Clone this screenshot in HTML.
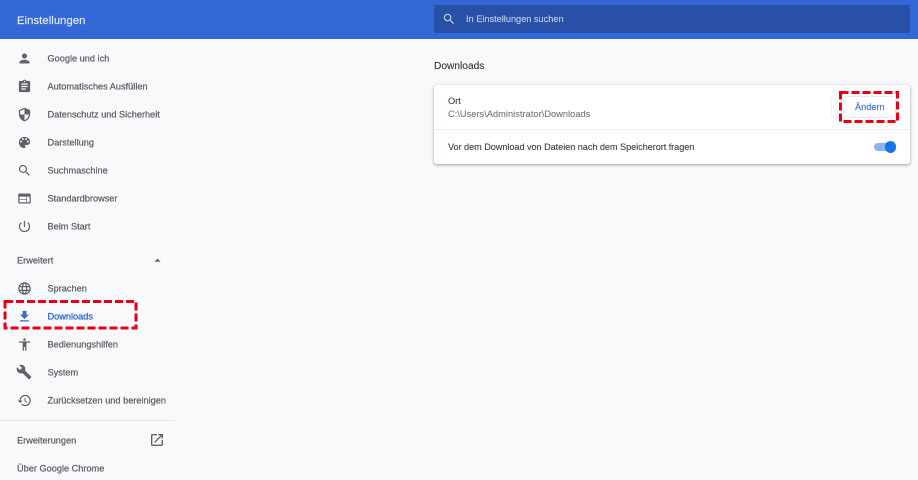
<!DOCTYPE html>
<html><head><meta charset="utf-8"><style>
html,body{margin:0;padding:0}
body{width:918px;height:480px;overflow:hidden;background:#f8f9fa;position:relative;font-family:"Liberation Sans",sans-serif;font-size:9.2px;color:#5f6368}
.t{position:absolute;white-space:nowrap;line-height:12px;font-weight:400;filter:blur(.25px)}
.nav{left:47.5px;-webkit-text-stroke:.25px #5f6368;transform:translateY(-.5px)}
svg.i{position:absolute;left:16.500px;width:15px;height:15px;fill:#5f6368}
</style></head><body>
<div style="position:absolute;left:0;top:0;width:918px;height:39px;background:#3367d6"></div>
<div style="position:absolute;left:434px;top:5px;width:476px;height:28px;background:#2850a7;border-radius:1px"></div>
<div class="t" style="left:17px;top:15px;font-size:11.2px;color:#e8effa;letter-spacing:.1px;-webkit-text-stroke:.15px #e8effa">Einstellungen</div>
<svg style="position:absolute;left:442px;top:12px;width:14px;height:14px;fill:#c3d1f0" viewBox="0 0 24 24"><path d="M15.5 14h-.79l-.28-.27A6.47 6.47 0 0 0 16 9.5 6.5 6.500 0 1 0 9.5 16c1.610 0 3.090-.59 4.230-1.570l.27.28v.79l5 4.990L20.490 19l-4.990-5zm-6 0C7.010 14 5 11.990 5 9.500S7.010 5 9.500 5 14 7.010 14 9.500 11.990 14 9.500 14z"/></svg>
<div class="t" style="left:466px;top:13px;color:#b9c8ea;-webkit-text-stroke:.15px #b9c8ea">In Einstellungen suchen</div>

<svg class="i" style="top:51px" viewBox="0 0 24 24"><path d="M12 12c2.210 0 4-1.790 4-4s-1.790-4-4-4-4 1.790-4 4 1.790 4 4 4zm0 2c-2.670 0-8 1.340-8 4v2h16v-2c0-2.660-5.330-4-8-4z"/></svg>
<div class="t nav" style="top:53px">Google und ich</div>
<svg class="i" style="top:79px" viewBox="0 0 24 24"><path d="M19 3h-4.180C14.400 1.840 13.300 1 12 1s-2.400.84-2.820 2H5c-1.100 0-2 .9-2 2v14c0 1.100.9 2 2 2h14c1.100 0 2-.9 2-2V5c0-1.100-.9-2-2-2zm-7 0c.55 0 1 .45 1 1s-.45 1-1 1-1-.45-1-1 .45-1 1-1zm2 14H7v-2h7v2zm3-4H7v-2h10v2zm0-4H7V7h10v2z"/></svg>
<div class="t nav" style="top:81px">Automatisches Ausfüllen</div>
<svg class="i" style="top:107px" viewBox="0 0 24 24"><path d="M12 1L3 5v6c0 5.550 3.840 10.740 9 12 5.160-1.260 9-6.450 9-12V5l-9-4zm0 10.990h7c-.53 4.120-3.280 7.790-7 8.940V12H5V6.300l7-3.110v8.800z"/></svg>
<div class="t nav" style="top:109px">Datenschutz und Sicherheit</div>
<svg class="i" style="top:135px" viewBox="0 0 24 24"><path d="M12 3a9 9 0 0 0 0 18c.83 0 1.500-.67 1.500-1.500 0-.39-.15-.74-.39-1.010-.23-.26-.38-.61-.38-.99 0-.83.67-1.500 1.500-1.500H16c2.760 0 5-2.240 5-5 0-4.420-4.030-8-9-8zm-5.500 9a1.500 1.500 0 1 1 0-3 1.500 1.500 0 0 1 0 3zm3-4a1.500 1.500 0 1 1 0-3 1.500 1.500 0 0 1 0 3zm5 0a1.500 1.500 0 1 1 0-3 1.500 1.500 0 0 1 0 3zm3 4a1.500 1.500 0 1 1 0-3 1.500 1.500 0 0 1 0 3z"/></svg>
<div class="t nav" style="top:137px">Darstellung</div>
<svg class="i" style="top:163px" viewBox="0 0 24 24"><path d="M15.5 14h-.79l-.28-.27A6.470 6.470 0 0 0 16 9.500 6.500 6.500 0 1 0 9.500 16c1.610 0 3.090-.59 4.230-1.570l.27.28v.79l5 4.990L20.490 19l-4.990-5zm-6 0C7.010 14 5 11.990 5 9.500S7.010 5 9.500 5 14 7.010 14 9.500 11.990 14 9.500 14z"/></svg>
<div class="t nav" style="top:165px">Suchmaschine</div>
<svg class="i" style="top:191px" viewBox="0 0 24 24"><path d="M20 4H4c-1.100 0-2 .9-2 2v12c0 1.100.9 2 2 2h16c1.100 0 2-.9 2-2V6c0-1.100-.9-2-2-2zm-5 14H4v-4h11v4zm0-5H4V9h11v4zm5 5h-4V9h4v9z"/></svg>
<div class="t nav" style="top:193px">Standardbrowser</div>
<svg class="i" style="top:219px" viewBox="0 0 24 24"><path d="M13 3h-2v10h2V3zm4.830 2.170l-1.420 1.420A6.920 6.920 0 0 1 19 12c0 3.870-3.130 7-7 7A6.995 6.995 0 0 1 7.580 6.580L6.170 5.170A8.932 8.932 0 0 0 3 12a9 9 0 0 0 18 0c0-2.740-1.230-5.180-3.170-6.830z"/></svg>
<div class="t nav" style="top:221px">Beim Start</div>

<div class="t nav" style="left:17px;top:255px">Erweitert</div>
<svg style="position:absolute;left:149.500px;top:253px;width:15px;height:15px;fill:#5f6368" viewBox="0 0 24 24"><path d="M7 14l5-5 5 5z"/></svg>

<svg class="i" style="top:281px" viewBox="0 0 24 24"><path d="M11.990 2C6.470 2 2 6.480 2 12s4.470 10 9.990 10C17.520 22 22 17.520 22 12S17.520 2 11.990 2zm6.930 6h-2.950a15.650 15.650 0 0 0-1.380-3.560A8.030 8.030 0 0 1 18.920 8zM12 4.040c.83 1.200 1.480 2.530 1.910 3.960h-3.820c.43-1.430 1.080-2.760 1.910-3.960zM4.260 14C4.100 13.360 4 12.690 4 12s.1-1.360.26-2h3.380c-.08.66-.14 1.320-.14 2s.06 1.340.14 2H4.260zm.82 2h2.950c.32 1.250.78 2.450 1.380 3.560A7.987 7.987 0 0 1 5.080 16zm2.950-8H5.080a7.987 7.987 0 0 1 4.330-3.560A15.650 15.650 0 0 0 8.030 8zM12 19.960c-.83-1.200-1.480-2.530-1.910-3.960h3.820c-.43 1.430-1.080 2.760-1.910 3.960zM14.340 14H9.660c-.09-.66-.16-1.320-.16-2s.07-1.350.16-2h4.680c.09.65.16 1.320.16 2s-.07 1.340-.16 2zm.25 5.560c.6-1.110 1.060-2.310 1.380-3.560h2.950a8.030 8.030 0 0 1-4.330 3.560zM16.360 14c.08-.66.14-1.320.14-2s-.06-1.340-.14-2h3.380c.16.64.26 1.310.26 2s-.1 1.360-.26 2h-3.380z"/></svg>
<div class="t nav" style="top:283px">Sprachen</div>
<svg class="i" style="top:309px;fill:#3367d6" viewBox="0 0 24 24"><path d="M19 9h-4V3H9v6H5l7 7 7-7zM5 18v2h14v-2H5z"/></svg>
<div class="t nav" style="top:311px;color:#3367d6;-webkit-text-stroke:.3px #3367d6">Downloads</div>
<svg class="i" style="top:337px" viewBox="0 0 24 24"><path d="M12 2a2 2 0 1 1 0 4 2 2 0 0 1 0-4zm9 7h-6v13h-2v-6h-2v6H9V9H3V7h18v2z"/></svg>
<div class="t nav" style="top:339px">Bedienungshilfen</div>
<svg class="i" style="top:364px;left:15.500px;width:16px;height:16px" viewBox="0 0 24 24"><path d="M22.700 19l-9.100-9.100c.9-2.300.4-5-1.500-6.900-2-2-5-2.400-7.400-1.300L9 6 6 9 1.600 4.700C.4 7.100.9 10.100 2.900 12.100c1.900 1.900 4.600 2.400 6.900 1.500l9.100 9.100c.4.400 1 .4 1.400 0l2.300-2.300c.5-.4.5-1.100.1-1.400z"/></svg>
<div class="t nav" style="top:367px">System</div>
<svg class="i" style="top:393px" viewBox="0 0 24 24"><path d="M13 3a9 9 0 0 0-9 9H1l3.890 3.890.07.14L9 12H6c0-3.870 3.130-7 7-7s7 3.130 7 7-3.130 7-7 7c-1.930 0-3.680-.79-4.940-2.060l-1.420 1.420A8.954 8.954 0 0 0 13 21a9 9 0 0 0 0-18zm-1 5v5l4.280 2.540.72-1.210-3.500-2.080V8H12z"/></svg>
<div class="t nav" style="top:395px">Zurücksetzen und bereinigen</div>
<div style="position:absolute;left:0;top:420px;width:175px;height:1px;background:#e4e6e9"></div>
<div class="t nav" style="left:17px;top:435px">Erweiterungen</div>
<svg style="position:absolute;left:149px;top:432px;width:16px;height:16px;fill:#5f6368" viewBox="0 0 24 24"><path d="M19 19H5V5h7V3H5a2 2 0 0 0-2 2v14a2 2 0 0 0 2 2h14c1.100 0 2-.9 2-2v-7h-2v7zM14 3v2h3.590l-9.830 9.830 1.410 1.410L19 6.410V10h2V3h-7z"/></svg>
<div class="t nav" style="left:17px;top:463px">Über Google Chrome</div>

<div class="t" style="left:434px;top:61px;font-size:10.2px;color:#3c4043;-webkit-text-stroke:.15px #3c4043">Downloads</div>
<div style="position:absolute;left:434px;top:85px;width:476px;height:79px;background:#fff;border-radius:3px;box-shadow:0 1px 2px rgba(60,64,67,.3),0 1px 3px 1px rgba(60,64,67,.15)"></div>
<div style="position:absolute;left:434px;top:129px;width:476px;height:1px;background:#eceef0"></div>
<div class="t" style="left:448px;top:95px;color:#3c4043;-webkit-text-stroke:.1px #3c4043">Ort</div>
<div class="t" style="left:448px;top:108px;color:#757575;letter-spacing:.06px;-webkit-text-stroke:.1px #757575">C:\Users\Administrator\Downloads</div>
<div class="t" style="left:448px;top:141px;color:#3c4043;letter-spacing:-.07px;-webkit-text-stroke:.1px #3c4043">Vor dem Download von Dateien nach dem Speicherort fragen</div>
<div style="position:absolute;left:831px;top:97px;width:1px;height:20px;background:#eff0f2"></div>
<div style="position:absolute;left:843px;top:96px;width:51px;height:20px;border:1px solid #e8eaed;border-radius:3px;background:#fff"></div>
<div class="t" style="left:855px;top:101px;color:#4a78dc;-webkit-text-stroke:.2px #4a78dc">Ändern</div>
<div style="position:absolute;left:874px;top:143px;width:20px;height:8px;border-radius:4px;background:#8ab4f0"></div>
<div style="position:absolute;left:884.500px;top:141px;width:11.500px;height:11.500px;border-radius:50%;background:#1a73e8"></div>

<svg style="position:absolute;left:0;top:0;width:918px;height:480px" viewBox="0 0 918 480" fill="none" stroke="#ea0014" stroke-width="3" stroke-dasharray="8 3"><rect x="5" y="301.500" width="131" height="26.500"/><rect x="840.500" y="92.500" width="57" height="29"/></svg>
</body></html>
